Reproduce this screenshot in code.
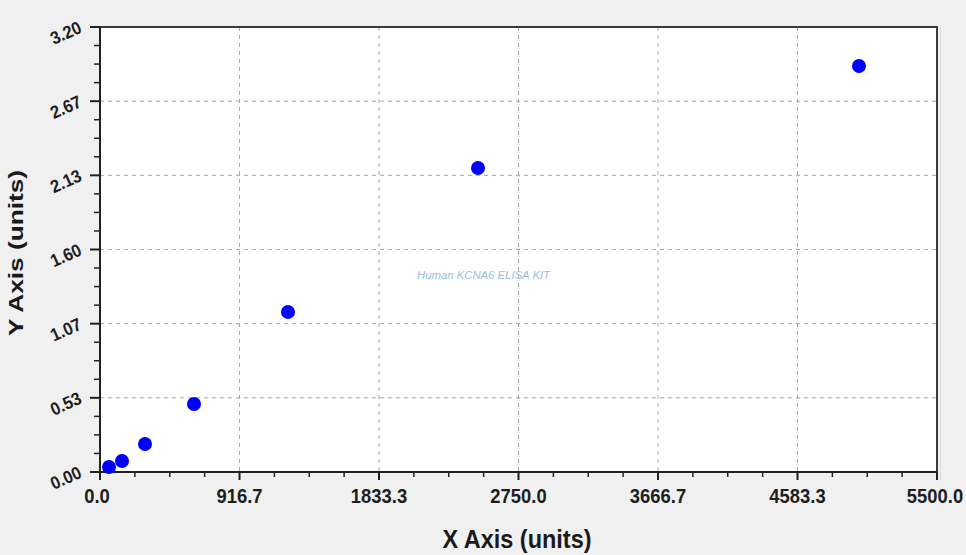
import React from "react";

const PLOT = { left: 100, top: 27, right: 937, bottom: 472 };
const xTicks = ["0.0", "916.7", "1833.3", "2750.0", "3666.7", "4583.3", "5500.0"];
const yTicks = ["3.20", "2.67", "2.13", "1.60", "1.07", "0.53", "0.00"];

// measured dot centres (px)
const points: [number, number][] = [
  [109, 467],
  [122, 461],
  [145, 444],
  [194, 404],
  [288, 312],
  [478, 168],
  [859, 66],
];

// rough Arial-bold advance widths, used to squeeze text to the picture
const em = (s: string) =>
  s.split("").reduce((n, c) => n + (c === "." ? 0.278 : 0.556), 0);

export default function App() {
  const w = PLOT.right - PLOT.left;
  const h = PLOT.bottom - PLOT.top;
  const xAt = (i: number) => PLOT.left + (i * w) / 6;
  const yAt = (i: number) => PLOT.top + (i * h) / 6;

  return (
    <div className="h-[555px] w-[966px] overflow-hidden bg-[#f0f0f0] font-['Liberation_Sans',Arial,sans-serif]">
      <svg width={966} height={555} className="block">
        {/* plot area */}
        <rect x={PLOT.left} y={PLOT.top} width={w} height={h} fill="#ffffff" />
        <line x1={940.5} y1={25} x2={940.5} y2={481} stroke="#dadada" strokeWidth={1} />

        {/* grid */}
        {[1, 2, 3, 4, 5].map((i) => (
          <line
            key={"gx" + i}
            x1={xAt(i)}
            y1={PLOT.top}
            x2={xAt(i)}
            y2={PLOT.bottom}
            stroke="#a6a6a6"
            strokeWidth={1}
            strokeDasharray="4 4"
          />
        ))}
        {[1, 2, 3, 4, 5].map((i) => (
          <line
            key={"gy" + i}
            x1={PLOT.left}
            y1={yAt(i)}
            x2={PLOT.right}
            y2={yAt(i)}
            stroke="#a6a6a6"
            strokeWidth={1}
            strokeDasharray="4 4"
          />
        ))}

        {/* frame */}
        <line x1={PLOT.left} y1={PLOT.top} x2={PLOT.right} y2={PLOT.top} stroke="#3a3a3a" strokeWidth={2} />
        <line x1={PLOT.right} y1={PLOT.top - 1} x2={PLOT.right} y2={PLOT.bottom + 8} stroke="#3a3a3a" strokeWidth={2} />
        <line x1={PLOT.left} y1={PLOT.top - 1} x2={PLOT.left} y2={PLOT.bottom + 8} stroke="#222" strokeWidth={2} />
        <line x1={PLOT.left} y1={PLOT.bottom} x2={PLOT.right} y2={PLOT.bottom} stroke="#222" strokeWidth={2} />

        {/* x ticks */}
        {Array.from({ length: 25 }).map((_, i) => {
          const x = PLOT.left + (i * w) / 24;
          const major = i % 4 === 0;
          return (
            <line
              key={"tx" + i}
              x1={x}
              y1={PLOT.bottom}
              x2={x}
              y2={PLOT.bottom + (major ? 8 : 5)}
              stroke="#222"
              strokeWidth={major ? 2 : 1.5}
            />
          );
        })}
        {/* y ticks */}
        {Array.from({ length: 25 }).map((_, i) => {
          const y = PLOT.top + (i * h) / 24;
          const major = i % 4 === 0;
          return (
            <line
              key={"ty" + i}
              x1={PLOT.left - (major ? 10 : 6)}
              y1={y}
              x2={PLOT.left}
              y2={y}
              stroke="#222"
              strokeWidth={major ? 2 : 1.5}
            />
          );
        })}

        {/* x labels */}
        {xTicks.map((t, i) => (
          <text
            key={t}
            x={xAt(i) - (i === 0 ? 3 : i === 6 ? 2 : 0)}
            y={503}
            textAnchor="middle"
            fontSize={21}
            fontWeight={700}
            fill="#1e1e1e"
            textLength={em(t) * 18.4}
            lengthAdjust="spacingAndGlyphs"
          >
            {t}
          </text>
        ))}

        {/* y labels */}
        {yTicks.map((t, i) => (
          <text
            key={t}
            transform={`translate(83 ${yAt(i) + 5}) rotate(-24)`}
            textAnchor="end"
            fontSize={18}
            fontWeight={700}
            fill="#1e1e1e"
            textLength={em(t) * 16.5}
            lengthAdjust="spacingAndGlyphs"
          >
            {t}
          </text>
        ))}

        {/* axis titles */}
        <text
          x={517}
          y={548}
          textAnchor="middle"
          fontSize={25}
          fontWeight={700}
          fill="#1a1a1a"
          textLength={149}
          lengthAdjust="spacingAndGlyphs"
        >
          X Axis (units)
        </text>
        <text
          transform="translate(23 253) rotate(-90)"
          textAnchor="middle"
          fontSize={21}
          fontWeight={700}
          fill="#1a1a1a"
          textLength={166}
          lengthAdjust="spacingAndGlyphs"
        >
          Y Axis (units)
        </text>

        {/* watermark */}
        <text
          x={417}
          y={279}
          fontSize={10}
          fontStyle="italic"
          fill="#9cc0de"
          textLength={133}
          lengthAdjust="spacingAndGlyphs"
        >
          Human KCNA6 ELISA KIT
        </text>

        {/* data */}
        {points.map(([cx, cy], i) => (
          <circle key={i} cx={cx} cy={cy} r={7} fill="#0000ff" />
        ))}
      </svg>
    </div>
  );
}
